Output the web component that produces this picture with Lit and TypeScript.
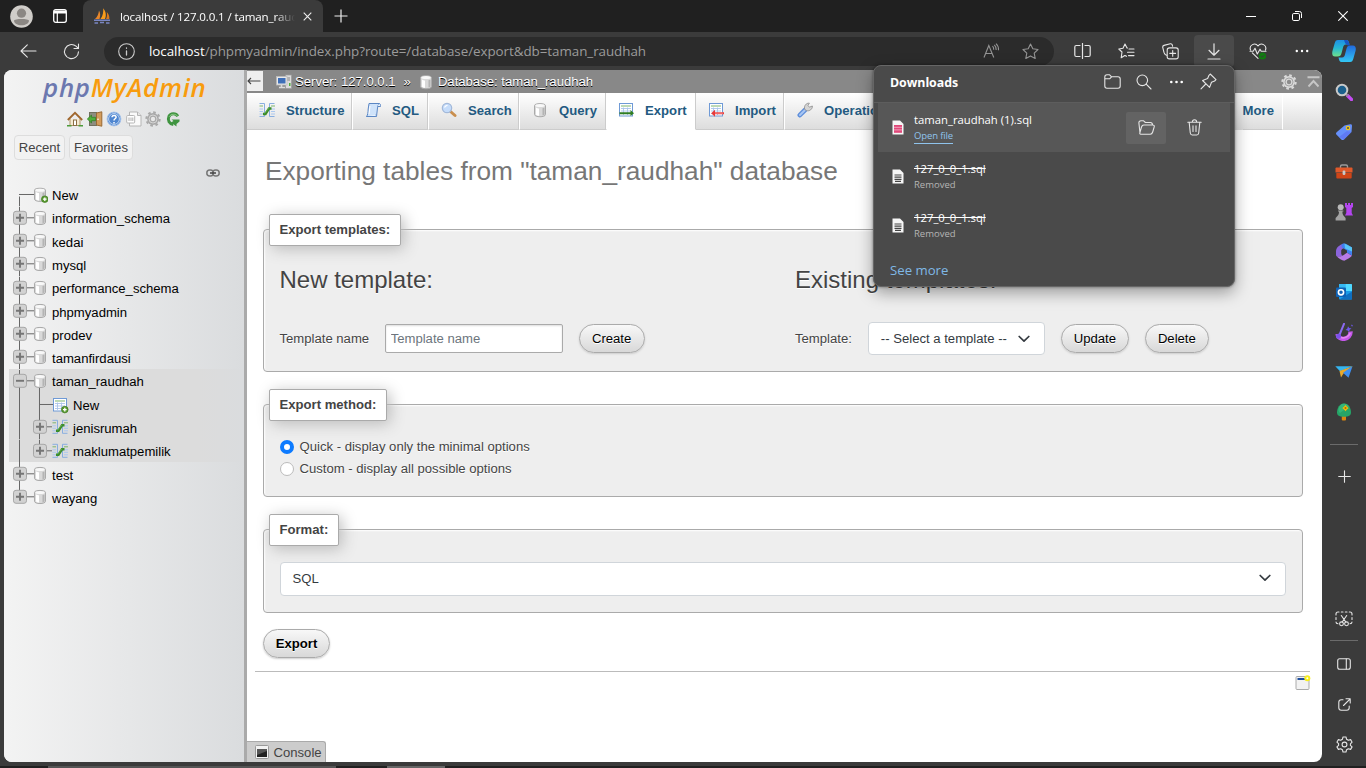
import { LitElement, html, svg, css, nothing, TemplateResult } from "lit";
import { customElement } from "lit/decorators.js";

type Glyph = TemplateResult | ReturnType<typeof svg>;

const icon = (w: number, h: number, vb: string, body: Glyph, cls = "") =>
  html`<svg class="ic ${cls}" width=${w} height=${h} viewBox=${vb} fill="none">${body}</svg>`;
const line = (w: number, h: number, body: Glyph, cls = "") =>
  icon(w, h, `0 0 ${w} ${h}`, svg`<g stroke="#e6e6e6" stroke-width="1.1" stroke-linecap="round" stroke-linejoin="round">${body}</g>`, cls);

/* phpMyAdmin icon set */
const dbShape = svg`
  <path d="M2.5 3.5C2.5 1 13.5 1 13.5 3.5V12.5C13.5 15.5 2.5 15.5 2.5 12.5Z" fill="#d9d9d9" stroke="#aaa"/>
  <path d="M4 5.5C5 6.3 6 6.5 7 6.5V13.8C6 13.8 4.5 13.3 4 12.8Z" fill="#fff"/>
  <path d="M10.5 6.3L12.5 5.6V12.8L10.5 13.6Z" fill="#b4b4b4"/>
  <ellipse cx="8" cy="3.6" rx="4.6" ry="1.5" fill="#f8f8f8"/>`;
const plusBadge = svg`<circle cx="12.8" cy="12.6" r="3.3" fill="#5a9a32" stroke="#3d7a1c" stroke-width=".7"/><path d="M12.8 10.8V14.4M11 12.6H14.6" stroke="#fff" stroke-width="1.3"/>`;
const tableShape = svg`
  <rect x="1.5" y="1.5" width="13" height="12.5" fill="#fff" stroke="#6f9ad6"/>
  <path d="M3 4H13" stroke="#7cb56f"/><path d="M3 6.5H13M3 9H13M3 11.5H13M5.5 5.5V13M9.5 5.5V13" stroke="#a9c4ea" stroke-width=".9"/>`;
const structShape = svg`
  <path d="M.5 1.5H5.5V14.5H.5M15.5 1.5H10.5V14.5H15.5" stroke="#88aee0"/>
  <path d="M.5 4H4M12 4H16" stroke="#7cb56f"/><path d="M.5 7H4M.5 9.5H4M.5 12H4M12 7H16M12 9.5H16M12 12H16" stroke="#abc8f0"/>
  <path d="M4 12H6.5L10 6.5H12.5" stroke="#3b8c2a" stroke-width="2.4"/><path d="M5.5 11.5L10 6" stroke="#6ab455" stroke-width=".8"/>`;
const gearShape = (c: string, d: string) => svg`
  <circle cx="8" cy="8" r="5.9" fill=${c}/><circle cx="8" cy="8" r="6.6" stroke=${c} stroke-width="2.2" stroke-dasharray="2.6 2.58"/>
  <circle cx="8" cy="8" r="4" stroke=${d} stroke-width=".7"/><circle cx="8" cy="8" r="2.2" fill=${d}/>`;

const menuIcons: Record<string, Glyph> = {
  structure: structShape,
  sql: svg`<path d="M4 1.5H14.5C13 2.5 13 4 12.5 6L11.5 14.5H1.5C3 13 3 10 3.2 7Z" fill="#cfe3fa" stroke="#5b87c4"/><path d="M12.5 4.5H15.5C15.6 3 15.6 2 14.3 1.5M1.5 14.5H10C11.5 14.5 11.5 13.5 11 12.5" stroke="#5b87c4" fill="#eaf3fd"/><path d="M5 4L4 12" stroke="#fff"/>`,
  search: svg`<path d="M9.5 9.5L14 13.5" stroke="#c98f4e" stroke-width="3" stroke-linecap="round"/><circle cx="6" cy="6" r="4.7" fill="#c5dcfa" stroke="#a3b9da" stroke-width="1.2"/><path d="M3.5 5.5C4 4 5 3.3 6.5 3.3" stroke="#fff" stroke-width="1.2"/>`,
  query: dbShape,
  export: svg`${tableShape}<path d="M1.5 11.2H13.5" stroke="#2f7d22" stroke-width="2"/><path d="M12.5 8L16 11.2L12.5 14Z" fill="#2f7d22"/>`,
  import: svg`${tableShape}<path d="M5.5 11.2H16" stroke="#e63a3a" stroke-width="2"/><path d="M7 7.7L3.2 11.2L7 14.7Z" fill="#e63a3a"/><path d="M7 11.2H15" stroke="#ff9a9a" stroke-width=".7"/>`,
  wrench: svg`<path d="M2.8 13.2L8 8" stroke="#5f8fdb" stroke-width="4.6" stroke-linecap="round"/><path d="M3 13L7.8 8.2" stroke="#a8c6f3" stroke-width="2" stroke-linecap="round"/><path d="M7.6 7.2C6.8 4 9 .8 12.4 1.2L11 3.4L12.4 5.2L15.4 4C15.6 7 12.6 9.6 9.4 8.6Z" fill="#d5d5d5" stroke="#8d8d8d" stroke-width=".8"/>`,
};

const quickIcons: Glyph[] = [
  svg`<path d="M3 8V14.5H13V8" fill="#f4ead2" stroke="#b09468"/><rect x="6.5" y="9" width="3" height="5.5" fill="#fff" stroke="#8b6f45"/><path d="M.8 9L8 1.8L15.2 9" stroke="#a0672e" stroke-width="1.9"/><path d="M0 14.8H4.5M11.5 14.8H16" stroke="#4d9b3a" stroke-width="1.6"/>`,
  svg`<rect x="2.5" y="1.5" width="7" height="13" fill="#8d8d80" stroke="#70705f"/><path d="M9.5 2L14.8 .8V15.2L9.5 14Z" fill="#d49c5c" stroke="#9a6a33"/><path d="M.3 8L4.5 4V6.3H8.5V9.7H4.5V12Z" fill="#4fae3c" stroke="#2f7d22" stroke-width=".7"/><circle cx="11" cy="8.3" r=".8" fill="#fff"/>`,
  svg`<circle cx="8" cy="8" r="6.9" fill="#4f86d0" stroke="#a5c2ea"/><circle cx="8" cy="8" r="5.4" stroke="#dbe8fa" stroke-width=".8"/><path d="M6 6.3C6 3.7 10.2 3.9 10.1 6.3C10 7.8 8 7.8 8 9.5M8 11V12.4" stroke="#fff" stroke-width="1.5"/>`,
  svg`<path d="M3.5 1H11.5L15 4.5V15H3.5Z" fill="#fafafa" stroke="#b5b5b5"/><path d="M11.5 1V4.5H15" stroke="#b5b5b5" fill="#e6e6e6"/><rect x=".7" y="4.5" width="8" height="7.5" rx="1" fill="#fff" stroke="#b5b5b5"/><path d="M3 6.5V10M5 6.5V10M6.8 6.5V10" stroke="#999" stroke-width=".8"/>`,
  gearShape("#a9a9a9", "#e8e8e8"),
  svg`<path d="M12.8 5.2C10.8 1.9 5.6 2 3.9 5.5C2.2 9.3 4.4 13 8.3 13.4" stroke="#3f9440" stroke-width="3"/><path d="M12.4 5C10.6 2.6 6 2.6 4.2 5.7" stroke="#8fcb88" stroke-width="1"/><path d="M6.5 8.5H14.5V10.5L11.5 13V15.5L6 11.5L8.5 10Z" fill="#3f9440"/>`,
];

interface Node { label: string; kind: "new" | "db" | "open" | "tnew" | "table"; last?: boolean }
const tree: Node[] = [
  { label: "New", kind: "new" },
  { label: "information_schema", kind: "db" },
  { label: "kedai", kind: "db" },
  { label: "mysql", kind: "db" },
  { label: "performance_schema", kind: "db" },
  { label: "phpmyadmin", kind: "db" },
  { label: "prodev", kind: "db" },
  { label: "tamanfirdausi", kind: "db" },
  { label: "taman_raudhah", kind: "open" },
  { label: "New", kind: "tnew" },
  { label: "jenisrumah", kind: "table" },
  { label: "maklumatpemilik", kind: "table", last: true },
  { label: "test", kind: "db" },
  { label: "wayang", kind: "db", last: true },
];

const toggle = (cx: number, minus = false) => svg`
  <rect x=${cx - 6.5} y="4.3" width="13" height="13" rx="2.5" fill="#d2d2d2" stroke="#a6a6a6"/>
  <path d=${minus ? `M${cx - 4} 10.8H${cx + 4}` : `M${cx - 4} 10.8H${cx + 4}M${cx} 6.8V14.8`} stroke="#757575" stroke-width="1.9"/>`;
const stroke = (d: string) => svg`<path d=${d} stroke="#666" stroke-width="1"/>`;

const treeGlyph = (n: Node) => {
  const sub = n.kind === "tnew" || n.kind === "table";
  const w = sub ? 65 : 44;
  let body: Glyph;
  if (n.kind === "new") {
    body = svg`${stroke("M15 11.5H31M15.5 13.5V23.3")}<g transform="translate(28 3.6)">${dbShape}${plusBadge}</g>`;
  } else if (n.kind === "db" || n.kind === "open") {
    body = svg`${stroke(n.last ? "M15.5 0V5" : "M15.5 0V23.3")}${stroke("M22 10.8H31")}
      ${n.kind === "open" ? stroke("M35.5 17V23.3") : nothing}
      ${toggle(16, n.kind === "open")}<g transform="translate(28 2.8)">${dbShape}</g>`;
  } else if (n.kind === "tnew") {
    body = svg`${stroke("M15.5 0V23.3M35.5 0V23.3M35.5 11.5H50")}<g transform="translate(48 4)">${tableShape}${plusBadge}</g>`;
  } else {
    body = svg`${stroke("M15.5 0V23.3")}${stroke(n.last ? "M35.5 0V5" : "M35.5 0V23.3")}${stroke("M42 10.8H48")}
      ${toggle(36)}<g transform="translate(48 2.8)">${structShape}</g>`;
  }
  return icon(w, 23.3, `0 0 ${w} 23.3`, body, "tg");
};

/* Browser rail icons */
const rail: Glyph[] = [
  svg`<path d="M12.5 12.5L16.5 16.5" stroke="#c44bf2" stroke-width="3.4" stroke-linecap="round"/><path d="M11 11L13 13" stroke="#8a8a8a" stroke-width="2"/><circle cx="7" cy="7" r="5.3" fill="#1c5f8c" stroke="#c9c9c9" stroke-width="2"/>`,
  svg`<path d="M9.5 2.5L15 1.2C16.5 1 17 1.6 17 3L16.5 9L9 16.4C8 17.3 7.2 17.3 6.3 16.4L1.6 11.8C.8 11 .8 10 1.6 9.2Z" fill="#6690fa"/><path d="M4 14L9 16.4L16.5 9L12 8Z" fill="#5a6cf0" opacity=".6"/><circle cx="13" cy="5" r="1.7" stroke="#f2c81a" stroke-width="1.2" fill="#555"/>`,
  svg`<path d="M5.5 5V3.5C5.5 2.6 6 2 7 2H11C12 2 12.5 2.6 12.5 3.5V5" stroke="#9b9b9b" stroke-width="1.4"/><path d="M.5 5.5C.5 5 1 4.6 1.6 4.6H16.4C17 4.6 17.5 5 17.5 5.5V9.5H.5Z" fill="#e0592a"/><path d="M1.3 10H16.7V14.5C16.7 15 16.2 15.5 15.6 15.5H2.4C1.8 15.5 1.3 15 1.3 14.5Z" fill="#cf4518"/><rect x="7.6" y="7.6" width="2.8" height="4.4" rx="1.2" fill="#c9c9c9"/>`,
  svg`<path d="M10 0H12V2H13V0H15V2H16V0H18V4L16.7 5V10L18 12.5H10L11.3 10V5L10 4Z" fill="#b445f0"/><circle cx="5.7" cy="4.3" r="3" fill="#b9b9b9"/><path d="M3 7.5H8.4V8.6H7.4C7.4 11 8 12.5 9.3 13.5L10.6 15V17.5H.6V15L2 13.5C3.4 12.5 4 11 4 8.6H3Z" fill="#a2a2a2"/>`,
  svg`<path d="M8.5 .6C4.5 2.3 1 4.3 1 8.5V12.6C3 14.6 5.5 14 7.2 12.6L6.2 11V7.4C6.8 6 9 4.6 11 4Z" fill="#8b64dc"/><path d="M7 1C9.5-.3 11 .6 17 4.4V12.6L12 9.8V7.4L7.4 4.8C6.2 3.6 6.3 2 7 1Z" fill="#3f7ff0"/><path d="M9.5 .6L17 4.4V8.6L10 5.4Z" fill="#56c5f5"/><path d="M1.2 12.8C4 14.8 6.5 13.6 12 9.8L17 12.8C15 14.8 12 16.4 9.8 17.6C7.5 17.9 4 15.8 1.2 12.8Z" fill="#b77be8"/>`,
  svg`<rect x="4" y="1" width="13" height="15.5" rx="1" fill="#1a9be8"/><path d="M4 1H10.5V8H4Z" fill="#35b8f2"/><path d="M10.5 1H16A1 1 0 0 1 17 2V8H10.5Z" fill="#50d9ff"/><path d="M4.5 16.5L17 8.5V16.5Z" fill="#0f6fc0"/><rect x="1" y="4.6" width="10" height="9.5" rx="1" fill="#0f62b5"/><circle cx="6" cy="9.3" r="2.6" stroke="#fff" stroke-width="1.6"/>`,
  svg`<path d="M2.5 11C3.2 18.5 16 17 15.5 8.5" stroke="#c558ea" stroke-width="4.4"/><path d="M3.5 13C6 16 13 15.5 15.2 10" stroke="#e487f4" stroke-width="1.6"/><path d="M9 .8L4 13" stroke="#8b6af2" stroke-width="2" stroke-linecap="round"/><circle cx="3.6" cy="13.2" r="2.5" fill="#7a52ea"/><path d="M13 3.2L14.2 5L16.5 5.5L14.6 6.8L14.2 9L12.6 7.4L10.5 7L12.4 5.6ZM16.6 1.6L17.8 2.2L17.4 3.6L16.2 3Z" fill="#6f57ef"/>`,
  svg`<path d="M.3 3.2L17.5 3.2L5 8.2Z" fill="#35b5f0"/><path d="M17.5 3.2L4.5 8L6 14.5L8.3 10.7Z" fill="#e8a92b"/><path d="M17.5 3.2L8 9.8L13.5 14.8Z" fill="#3d8ff2"/>`,
  svg`<rect x="6.8" y="12" width="4.2" height="5.6" rx="1" fill="#d9860f"/><path d="M9 .5C13.5.5 16 5 16 9.5C16 12.7 13.5 13.8 9 13.8S2 12.7 2 9.5C2 5 4.5.5 9 .5Z" fill="#25a567"/><path d="M9 .5C11 .5 12.8 1.6 14 3.2L5 10C3.5 9 3 7 4 4.5C5 2 7 .5 9 .5Z" fill="#3fc283" opacity=".6"/><path d="M10.5 2L12 3.7L13.7 5L12 6.5L10.5 8.2L9 6.5L7.3 5L9 3.7Z" fill="#f2b90d"/><circle cx="10.5" cy="5" r="1" fill="#b06a00"/>`,
];

const fileIcon = (accent: boolean) =>
  icon(12, 15, "0 0 12 15", svg`<path d="M.5 .5H8L11.5 4V14.5H.5Z" fill="#f6f6f6"/>${accent
    ? svg`<path d="M2 5H10V12.8H2Z" fill="#e0487a"/><path d="M2 7.3H10M2 9.9H10" stroke="#f9c9d8" stroke-width=".7"/>`
    : svg`<path d="M2.5 6H9.5M2.5 8.2H9.5M2.5 10.4H9.5M3 12.4H9" stroke="#444" stroke-width="1.2"/>`}`);

const chevron = icon(12, 8, "0 0 12 8", svg`<path d="M1.2 1.5L6 6.2L10.8 1.5" stroke="#343a40" stroke-width="1.7" stroke-linecap="round" stroke-linejoin="round"/>`);

@customElement("app-root")
export class AppRoot extends LitElement {
  static styles = css`
    :host { display: block; width: 1366px; height: 768px; overflow: hidden; }
    * { box-sizing: border-box; }
    .win { width: 1366px; height: 768px; display: flex; flex-direction: column; position: relative; background: #3b3b3b; font-family: "Liberation Sans", Arial, sans-serif; font-size: 13.12px; color: #444; white-space: nowrap; }
    .ic { display: block; flex: none; }
    .ui { font-family: "Open Sans", "Noto Sans", sans-serif; }

    .titlebar { height: 32px; flex: none; background: #202020; display: flex; color: #fff; }
    .profile { width: 83px; display: flex; align-items: center; padding-left: 10px; gap: 20px; }
    .tab { width: 240px; background: #3b3b3b; border-radius: 8px 8px 0 0; display: flex; align-items: center; padding-left: 11px; }
    .tab .title { width: 175px; margin-left: 10px; overflow: hidden; font-size: 11.6px; letter-spacing: -.15px; -webkit-mask-image: linear-gradient(90deg, #000 155px, transparent 175px); }
    .tab .x { margin-left: 8px; }
    .newtab { margin: 9px 0 0 11px; }
    .winctl { margin-left: auto; display: flex; align-items: center; gap: 36px; padding-right: 18px; }

    .toolbar { height: 38px; flex: none; display: flex; align-items: center; padding-left: 20px; }
    .reload { margin-left: 26px; }
    .address { width: 950px; height: 29px; margin: 0 0 0 24px; border-radius: 15px; background: #2b2b2b; display: flex; align-items: center; padding: 0 15px 0 14px; color: #9b9b9b; font-size: 13.4px; }
    .url { margin-left: 14px; flex: 1; letter-spacing: -.05px; }
    .url b { color: #fff; font-weight: 400; }
    .readaloud { margin-right: 22.5px; }
    .tools { display: flex; align-items: center; margin-left: 8px; }
    .tools .t { width: 40px; height: 32px; display: flex; align-items: center; justify-content: center; margin-right: 4px; border-radius: 4px; flex: none; }
    .tools .t.on { background: #4a4a4a; }
    .copilot { margin-left: 6px; }

    .body { flex: 1; min-height: 0; display: flex; padding-left: 4px; }
    .page { width: 1318px; height: 692px; flex: none; border-radius: 8px; overflow: hidden; display: flex; background: #fff; }
    .rail { width: 44px; display: flex; flex-direction: column; align-items: center; padding: 1px 0 2px; }
    .rail .slot { height: 40.1px; display: flex; align-items: center; justify-content: center; flex: none; padding-top: 1px; }
    .rail .sep { width: 28px; height: 1px; background: #6b6b6b; flex: none; }
    .rail .s1 { margin: 12px 0 11.5px; }
    .rail .grow { flex: 1; }
    .rail .s2 { margin: 2px 0 2.5px; }
    .strip { height: 2px; flex: none; background: linear-gradient(90deg, #202020 48px, #555 48px 336px, #202020 336px 387px, #666 387px 445px, #202020 445px); }

    .nav { width: 240px; flex: none; background: linear-gradient(90deg, #f3f3f3, #dadcde); display: flex; flex-direction: column; color: #000; }
    .logo { height: 36px; margin-left: 39px; font: italic 600 25.8px/35px "Open Sans", sans-serif; letter-spacing: .75px; color: #6c78af; }
    .logo span { color: #f89c0e; }
    .quick { display: flex; gap: 3.6px; margin: 5px 0 0 63px; }
    .choice { display: flex; gap: 4px; margin: 8px 0 0 10px; }
    .choice span { height: 25px; border: 1px solid #ddd; border-radius: 4px; background: #f2f2f2; color: #444; display: flex; align-items: center; justify-content: center; }
    .choice .c1 { width: 51px; } .choice .c2 { width: 64px; }
    .link { margin: 8.7px 0 6.7px 202px; }
    .row { height: 23.3px; display: flex; align-items: center; flex: none; }
    .row .name { margin-left: 4px; padding-top: 1px; }
    .sel { margin: -1.2px 0 1.2px 5px; padding-top: 1.2px; height: 93.2px; flex: none; background: linear-gradient(90deg, #dcdcdc 80%, #dadcde); }
    .sel .tg { margin-left: -5px; }
    .resizer { width: 3px; flex: none; background: #aaa; }

    .main { flex: 1; min-width: 0; display: flex; flex-direction: column; }
    .crumbs { height: 23px; flex: none; background: #888; display: flex; align-items: center; color: #fff; text-shadow: 0 1px 0 #000; }
    .back { width: 16px; height: 20px; background: #eee; display: flex; align-items: center; margin-bottom: 1px; }
    .crumbs .srv { margin: 0 3px 0 13px; }
    .crumbs .raquo { margin: 0 7px 0 8px; }
    .crumbs .dbt { margin-left: 4px; }
    .crumbs .gear { margin-left: auto; }
    .crumbs .up { margin: 0 2px 0 10px; }
    .menu { height: 37px; flex: none; display: flex; background: linear-gradient(#fff, #dcdcdc); font-weight: 700; color: #235a81; letter-spacing: .02px; }
    .m { display: flex; align-items: center; padding: 0 0 2px 12px; gap: 11px; border-right: 1px solid #fff; border-bottom: 1px solid #ccc; box-shadow: inset -1px 0 #ccc; flex: none; overflow: hidden; }
    .m.on { background: #fff; border-bottom-color: #fff; padding-left: 11px; border-right: 1px solid #ccc; box-shadow: none; }
    .m0 { width: 106px; } .m1 { width: 76px; } .m2 { width: 91px; } .m3 { width: 87px; } .m4 { width: 89px; } .m5 { width: 89px; } .m6 { width: 125px; }
    .more { margin-left: auto; padding-right: 8px; border-right: 1px solid #fff; display: flex; align-items: center; padding-bottom: 2px; margin-right: 39px; border-bottom: 1px solid #ccc; }

    .content { flex: 1; display: flex; flex-direction: column; padding: 0 19px 0 16px; }
    h2 { margin: 0 0 0 2px; height: 99px; flex: none; font-weight: 400; font-size: 26.24px; line-height: 83px; color: #777; }
    .set { border: 1px solid #aaa; border-radius: 4px; background: #eee; box-shadow: inset 1px 1px 2px #fff; padding: 0 16px 0 15.5px; flex: none; margin-bottom: 32px; text-shadow: 0 1px 0 #fff; }
    .legend { display: flex; width: max-content; height: 32px; align-items: center; margin: -16px 0 0 -10.5px; padding: 0 10px 2px 9.5px; border: 1px solid #aaa; border-radius: 2px; background: #fff; box-shadow: 3px 3px 15px #bbb; font-weight: 700; }
    .f1 { height: 143px; } .f2 { height: 93px; } .f3 { height: 84px; margin-bottom: 16px; }
    .cols { display: grid; grid-template-columns: 515.5px 1fr; }
    h3 { margin: 0; font-weight: 400; font-size: 24px; line-height: 30px; padding-top: 19px; height: 76px; }
    .line { display: flex; align-items: center; height: 33px; }
    .input { width: 178px; height: 29px; margin: 0 16px 0 15.5px; border: 1px solid #aaa; border-radius: 2px; padding: 0 5px; background: #fff; box-shadow: inset 0 1px 2px #ddd; font: inherit; }
    .input::placeholder { color: #6c757d; opacity: 1; }
    .btn { height: 29px; border: 1px solid #aaa; border-radius: 15px; background: linear-gradient(#f8f8f8, #d8d8d8); color: #000; display: flex; align-items: center; justify-content: center; box-shadow: 0 1px 2px #ccc; text-shadow: 0 1px 0 #fff; flex: none; }
    .w66 { width: 66px; } .w68 { width: 68px; margin-right: 16px; } .w64 { width: 64px; }
    .select { background: #fff; border: 1px solid #d0d5da; border-radius: 4px; display: flex; align-items: center; justify-content: space-between; color: #343a40; }
    .s-a { width: 177px; height: 33px; margin: 0 16px; padding: 0 14px 0 12px; }
    .s-b { height: 34px; margin-top: 16px; padding: 0 14px 2px 12px; }
    .radios { padding-top: 14.5px; }
    .radio { height: 22px; display: flex; align-items: center; gap: 6px; }
    .dot { width: 14px; height: 14px; border-radius: 50%; border: 1px solid #bbb; background: #fff; }
    .dot.on { border: 4.5px solid #0d7bff; }
    .go { width: 67px; font-weight: 700; }
    .hr { height: 1px; background: #bbb; margin: 13px -7px 0 -8px; flex: none; }
    .newwin { align-self: flex-end; margin: 3px -8px 0 0; }
    .console { width: 79px; height: 21px; margin-top: auto; border: 1px solid #aaa; border-width: 1px 1px 0 0; border-radius: 0 3px 0 0; background: #ccc; display: flex; align-items: center; padding-left: 8px; gap: 4.5px; flex: none; }

    .dl { position: absolute; left: 873px; top: 65px; width: 362px; height: 222px; border: 1px solid #666; border-radius: 8px; background: #4a4a4a; box-shadow: 0 6px 16px rgba(0,0,0,.35), 0 0 3px rgba(0,0,0,.4); color: #fff; }
    .dlhead { height: 37px; display: flex; align-items: center; padding: 0 17px 0 16px; border-bottom: 1px solid #5d5d5d; }
    .dlhead b { font-size: 12.4px; font-weight: 700; flex: 1; letter-spacing: -.05px; padding-bottom: 3px; }
    .dlhead .ic { margin-left: 15.5px; margin-bottom: 5px; }
    .item { height: 49px; margin: 0 4px; display: flex; align-items: center; padding-left: 14px; }
    .item.hot { background: #575757; }
    .item .txt { margin-left: 10px; flex: 1; display: flex; flex-direction: column; align-items: flex-start; }
    .fn { font-size: 11.3px; line-height: 16px; }
    .fn.gone { text-decoration: line-through; line-height: 15px; padding-bottom: 2px; margin-top: -1px; }
    .st { font-size: 9.5px; line-height: 14px; color: #b5b5b5; }
    .st.open { color: #8fc3ec; border-bottom: 1px solid #8fc3ec; line-height: 15px; letter-spacing: -.12px; }
    .act { width: 40px; height: 32px; display: flex; align-items: center; justify-content: center; border-radius: 2px; margin-right: 8px; }
    .act.on { background: #636363; }
    .item .last { margin-right: 16px; }
    .seemore { padding: 10px 16px 0; font-size: 13.2px; color: #7fb8e6; line-height: 20px; }
  `;

  private titlebar() {
    return html`<div class="titlebar ui">
      <div class="profile">
        ${icon(23, 23, "0 0 23 23", svg`<circle cx="11.5" cy="11.5" r="11.3" fill="#d0cdc9"/><circle cx="11.5" cy="8.2" r="4.6" fill="#8b8783"/><path d="M4 15.8C4 13.5 19 13.5 19 15.8C18.6 18.6 15.5 20.3 11.5 20.3S4.4 18.6 4 15.8Z" fill="#8b8783"/>`)}
        ${icon(14, 14, "0 0 14 14", svg`<rect x=".7" y=".7" width="12.6" height="12.6" rx="2" stroke="#fff" stroke-width="1.3"/><path d="M1 3H13" stroke="#fff" stroke-width="3"/><path d="M4.3 3V13" stroke="#fff" stroke-width="1.2"/>`)}
      </div>
      <div class="tab">
        ${icon(16, 16, "0 0 16 16", svg`<path d="M1 11C3.5 9 4.5 6 5 2.5C6.5 5 6.5 8 5.5 11Z" fill="#e8872b"/><path d="M6.5 11C9 8 9.5 4 9.2.3C12.3 4 12.3 8 11 11Z" fill="#f89c1c"/><path d="M12 11C13.3 8.5 13.2 6 12.8 4C15 6.5 15.6 8.5 15.3 11Z" fill="#d9791e"/><path d="M0 12.3H16M.5 15H4M6 14.5H10M12 15H15.5" stroke="#7a86c2" stroke-width="1.4"/>`)}
        <span class="title">localhost / 127.0.0.1 / taman_raudhah</span>
        <span class="x">${icon(9, 9, "0 0 9 9", svg`<path d="M.7 .7L8.3 8.3M8.3 .7L.7 8.3" stroke="#eee" stroke-width="1.1"/>`)}</span>
      </div>
      <span class="newtab">${icon(14, 14, "0 0 14 14", svg`<path d="M7 .5V13.5M.5 7H13.5" stroke="#eee" stroke-width="1.2"/>`)}</span>
      <div class="winctl">
        ${icon(10, 10, "0 0 10 10", svg`<path d="M0 5.5H10" stroke="#fff"/>`)}
        ${icon(10, 10, "0 0 10 10", svg`<rect x=".5" y="2.5" width="7" height="7" rx="1.3" stroke="#fff"/><path d="M3 .5H7.5A2 2 0 0 1 9.5 2.5V7" stroke="#fff"/>`)}
        ${icon(10, 10, "0 0 10 10", svg`<path d="M.3 .3L9.7 9.7M9.7 .3L.3 9.7" stroke="#fff" stroke-width="1.1"/>`)}
      </div>
    </div>`;
  }

  private toolbar() {
    const t = (body: TemplateResult, on = false) => html`<span class="t ${on ? "on" : ""}">${body}</span>`;
    return html`<div class="toolbar ui">
      ${line(17, 14, svg`<path d="M16 7H1M7.3 .8L1 7L7.3 13.2"/>`)}
      ${line(17, 17, svg`<path d="M15.5 8.7A7 7 0 1 1 13 3.2L15.3 5.4M15.5 1V5.5H11"/>`, "reload")}
      <div class="address">
        ${line(17, 17, svg`<circle cx="8.5" cy="8.5" r="7.8" stroke="#ccc"/><path d="M8.5 8V12M8.5 5V5.3" stroke="#ccc" stroke-width="1.3"/>`)}
        <span class="url"><b>localhost</b>/phpmyadmin/index.php?route=/database/export&amp;db=taman_raudhah</span>
        ${icon(17, 16, "0 0 17 16", svg`<path d="M1 14.5L5.8 2.5L10.8 14.5M2.7 10.5H9.2M9.5 3.2C10.5 4.2 10.8 5.3 10.7 6.7M11.3 1.8C12.8 3.2 13.3 5 13.2 7M13 .6C15 2.4 15.7 4.7 15.5 7.2" stroke="#949494" stroke-width="1.1"/>`, "readaloud")}
        ${icon(17, 17, "0 0 17 17", svg`<path d="M8.5 1L10.8 5.8L16 6.5L12.2 10.1L13.2 15.5L8.5 12.9L3.8 15.5L4.8 10.1L1 6.5L6.2 5.8Z" stroke="#949494" stroke-width="1.1" stroke-linejoin="round"/>`)}
      </div>
      <div class="tools">
        ${t(line(17, 16, svg`<path d="M8.5 .5V15.5M6 2.5H2.2C1.3 2.5 .8 3 .8 3.9V12C.8 13 1.3 13.5 2.2 13.5H6M11 2.5H14.8C15.7 2.5 16.2 3 16.2 3.9V12C16.2 13 15.7 13.5 14.8 13.5H11" stroke-width="1.2"/>`))}
        ${t(line(17, 17, svg`<path d="M9.5 5H9L7 1L5 5.2L.8 6L4 9L3.2 14.8L6.8 12.5M11 6H16M9.5 9.3H16M10.5 12.6H16"/><path d="M7 12.5L8.5 13.3"/>`))}
        ${t(line(17, 17, svg`<path d="M4.7 12.2L3.6 11.7C2.6 11.2 2.3 10.4 2 9.4L.8 4.7C.5 3.6 1 2.7 2 2.4L8.3.8C9.3.6 10 1 10.3 2L10.6 3.3"/><rect x="5.2" y="4.9" width="11" height="11" rx="2.2"/><path d="M10.7 7.5V13.3M7.8 10.4H13.6"/>`))}
        ${t(line(14, 17, svg`<path d="M7 .8V12M2 7.3L7 12.2L12 7.3M1 16H13" stroke-width="1.2"/>`), true)}
        ${t(line(18, 17, svg`<path d="M1.5 7C-.3 2 6 -1 9 3C12 -1 18.3 2 16.5 7M3.3 9.8L9 15.3M1 8.3H4.2L6 5.3L8.3 11L11 6.2L12.2 8.3H17"/><circle cx="13.5" cy="13" r="3.6" fill="#107c10" stroke="none"/><path d="M12 13L13.2 14.2L15.2 12" stroke="#3b3b3b" stroke-width=".9"/>`))}
        ${t(icon(14, 4, "0 0 14 4", svg`<circle cx="1.8" cy="2" r="1.2" fill="#fff"/><circle cx="7" cy="2" r="1.2" fill="#fff"/><circle cx="12.2" cy="2" r="1.2" fill="#fff"/>`))}
        ${icon(24, 24, "0 0 24 24", svg`
          <defs><linearGradient id="ca" x1="0" y1="0" x2="0" y2="1"><stop stop-color="#1e8fe6"/><stop offset=".5" stop-color="#27b8d2"/><stop offset="1" stop-color="#6fe08a"/></linearGradient>
          <linearGradient id="cb" x1="0" y1="0" x2="0" y2="1"><stop stop-color="#2069dc"/><stop offset="1" stop-color="#33c8f5"/></linearGradient></defs>
          <path d="M6 1H14.5C16.5 1 16.9 3 17.5 5.5H14C12 5.5 11.4 7 10.9 9L9.6 14C9 16.4 8 17.5 5.5 17.5H3C.5 17.5-.2 15.3 .4 12.3L2.6 4.5C3.3 2 4 1 6 1Z" fill="url(#ca)"/>
          <path d="M18 23H9.5C7.5 23 7.1 21 6.5 18.5H10C12 18.5 12.6 17 13.1 15L14.4 10C15 7.6 16 6.5 18.5 6.5H21C23.5 6.5 24.2 8.7 23.6 11.7L21.4 19.5C20.7 22 20 23 18 23Z" fill="url(#cb)"/>
          <path d="M12 1H14.5C16.5 1 16.9 3 17.8 6.5C15.6 6.8 13.6 6.5 12 1Z" fill="#1a56c4"/>`, "copilot")}
      </div>
    </div>`;
  }

  private nav() {
    const row = (n: Node) => html`<div class="row">${treeGlyph(n)}<span class="name">${n.label}</span></div>`;
    return html`<div class="nav">
      <div class="logo">php<span>MyAdmin</span></div>
      <div class="quick">${quickIcons.map((q) => icon(16, 16, "0 0 16 16", q))}</div>
      <div class="choice"><span class="c1">Recent</span><span class="c2">Favorites</span></div>
      <div class="link">${icon(14, 8, "0 0 14 8", svg`<rect x=".8" y="1" width="6.6" height="6" rx="3" stroke="#777" stroke-width="1.5"/><rect x="6.6" y="1" width="6.6" height="6" rx="3" stroke="#777" stroke-width="1.5"/><path d="M4 4H10" stroke="#444" stroke-width="1.5"/>`)}</div>
      ${tree.slice(0, 8).map(row)}
      <div class="sel">${tree.slice(8, 12).map(row)}</div>
      ${tree.slice(12).map(row)}
    </div>`;
  }

  private mainPane() {
    const tabs: [string, string][] = [["structure", "Structure"], ["sql", "SQL"], ["search", "Search"], ["query", "Query"], ["export", "Export"], ["import", "Import"], ["wrench", "Operations"]];
    return html`<div class="main">
      <div class="crumbs">
        <span class="back">${icon(14, 8, "0 0 14 8", svg`<path d="M13.5 4H1M4 1L1 4L4 7" stroke="#444" stroke-width="1.1"/>`)}</span>
        ${icon(16, 16, "0 0 16 16", svg`<rect x="9.5" y="1" width="6" height="13.5" fill="#dcdcdc" stroke="#9a9a9a" stroke-width=".7"/><path d="M11 4H14M11 6H14" stroke="#888"/><rect x="13" y="9" width="1.5" height="3" fill="#4fae3c"/><rect x=".5" y="2.5" width="10.5" height="8.5" fill="#e8e8e8" stroke="#bbb" stroke-width=".8"/><rect x="2" y="4" width="7.5" height="5.5" fill="#3f6fb8"/><path d="M3 13.5H9M5.5 11V13.5" stroke="#ddd" stroke-width="1.6"/>`, "srv")}
        <span>Server: 127.0.0.1</span><span class="raquo">»</span>
        ${icon(16, 16, "0 0 16 16", dbShape)}
        <span class="dbt">Database: taman_raudhah</span>
        ${icon(16, 16, "0 0 16 16", gearShape("#dadada", "#8c8c8c"), "gear")}
        ${icon(13, 12, "0 0 13 12", svg`<path d="M.5 1.3H12.5M1.5 10.5L6.5 5L11.5 10.5" stroke="#c6c6c6" stroke-width="1.9"/>`, "up")}
      </div>
      <div class="menu">
        ${tabs.map(([k, l], i) => html`<div class="m m${i} ${k === "export" ? "on" : ""}">${icon(16, 16, "0 0 16 16", menuIcons[k])}<span>${l}</span></div>`)}
        <div class="more">More</div>
      </div>
      <div class="content">
        <h2>Exporting tables from "taman_raudhah" database</h2>
        <div class="set f1">
          <div class="legend">Export templates:</div>
          <div class="cols">
            <div><h3>New template:</h3><div class="line">Template name<input class="input" placeholder="Template name"><span class="btn w66">Create</span></div></div>
            <div><h3>Existing templates:</h3><div class="line">Template:<span class="select s-a"><span>-- Select a template --</span>${chevron}</span><span class="btn w68">Update</span><span class="btn w64">Delete</span></div></div>
          </div>
        </div>
        <div class="set f2">
          <div class="legend">Export method:</div>
          <div class="radios">
            <div class="radio"><span class="dot on"></span>Quick - display only the minimal options</div>
            <div class="radio"><span class="dot"></span>Custom - display all possible options</div>
          </div>
        </div>
        <div class="set f3">
          <div class="legend">Format:</div>
          <div class="select s-b"><span>SQL</span>${chevron}</div>
        </div>
        <div class="btn go">Export</div>
        <div class="hr"></div>
        <div class="newwin">${icon(16, 16, "0 0 16 16", svg`<rect x="1" y="1.5" width="13" height="13" rx="1" fill="#f2f2f2" stroke="#aaa"/><path d="M2.5 4H10" stroke="#1d4fa0" stroke-width="2.2"/><circle cx="12.3" cy="3.2" r="3" fill="#f7ee1e"/><circle cx="12.3" cy="3.2" r="1" fill="#fff"/>`)}</div>
      </div>
      <div class="console">${icon(14, 14, "0 0 14 14", svg`<rect x=".5" y=".5" width="13" height="13" rx="1" fill="#f2f2f2" stroke="#999"/><path d="M2 4H12V12H2Z" fill="#222"/><path d="M2 4H12V6L2 10Z" fill="#555"/>`)}<span>Console</span></div>
    </div>`;
  }

  private railPane() {
    return html`<div class="rail">
      ${rail.map((r) => html`<span class="slot">${icon(18, 18, "0 0 18 18", r)}</span>`)}
      <span class="sep s1"></span>
      <span class="slot">${line(13, 13, svg`<path d="M6.5 .7V12.3M.7 6.5H12.3"/>`)}</span>
      <span class="grow"></span>
      <span class="slot">${line(18, 16, svg`<path d="M1 4V3C1 1.8 1.8 1 3 1H4M6.3 1H8M10.3 1H12M14.3 1H15C16.2 1 17 1.8 17 3V4M17 6.5V8.5M1 6.5V8.5M1 11C1 12 1.8 12.7 3 12.7M17 11C17 12 16.2 12.7 15 12.7M6.3 4.5L10.8 11M11.7 4.5L7.2 11"/><circle cx="6.5" cy="12.8" r="1.9"/><circle cx="11.5" cy="12.8" r="1.9"/>`)}</span>
      <span class="sep s2"></span>
      <span class="slot">${line(14, 12, svg`<rect x=".7" y=".7" width="12.6" height="10.6" rx="2"/><path d="M9.3 1V11"/>`)}</span>
      <span class="slot">${line(13, 13, svg`<path d="M5 1.8H3.3C1.8 1.8 .8 2.8 .8 4.3V9.7C.8 11.2 1.8 12.2 3.3 12.2H8.7C10.2 12.2 11.2 11.2 11.2 9.7V8M5.5 7.5L12.2 .8M8 .8H12.2V5"/>`)}</span>
      <span class="slot">${line(17, 17, svg`<circle cx="8.5" cy="8.5" r="2.4"/><path d="M7 1H10L10.6 3.3L12.3 4.3L14.6 3.6L16.1 6.2L14.4 7.8V9.4L16.1 10.9L14.6 13.4L12.3 12.7L10.6 13.7L10 16H7L6.4 13.7L4.7 12.7L2.4 13.4L.9 10.9L2.6 9.3V7.7L.9 6.2L2.4 3.6L4.7 4.3L6.4 3.3Z"/>`)}</span>
    </div>`;
  }

  private downloads() {
    return html`<div class="dl ui">
      <div class="dlhead"><b>Downloads</b>
        ${line(17, 15, svg`<path d="M.8 3C.8 1.6 1.6 .8 3 .8H5.6L7.6 2.8H14C15.4 2.8 16.2 3.6 16.2 5V12C16.2 13.4 15.4 14.2 14 14.2H3C1.6 14.2 .8 13.4 .8 12ZM.8 4.8H5.6L7.6 2.8"/>`)}
        ${line(16, 16, svg`<circle cx="6.3" cy="6.3" r="5.3"/><path d="M10.2 10.2L15 15"/>`)}
        ${icon(17, 4, "0 0 17 4", svg`<circle cx="3.3" cy="2" r="1.3" fill="#fff"/><circle cx="8.5" cy="2" r="1.3" fill="#fff"/><circle cx="13.7" cy="2" r="1.3" fill="#fff"/>`)}
        ${line(17, 17, svg`<path d="M10.2 1L16 6.6L14.6 8L11.5 9.3L9.6 14.4L2.6 7.5L7.6 5.5L9 2.3ZM5.8 11L1 15.8"/>`)}
      </div>
      <div class="item hot">${fileIcon(true)}<div class="txt"><span class="fn">taman_raudhah (1).sql</span><span class="st open">Open file</span></div>
        <span class="act on">${line(17, 15, svg`<path d="M2 13L.9 3C.8 1.6 1.6 .8 3 .8H5.6L7.4 2.5H12.5C13.7 2.5 14.4 3.2 14.5 4.8M2.8 14.2C1.8 14.2 1.6 13.6 1.9 12.6L3.5 7C3.9 5.6 4.5 5 5.8 5H14.8C16 5 16.5 5.7 16.2 6.8L14.7 12C14.2 13.6 13.6 14.2 12.3 14.2Z"/>`)}</span>
        <span class="act last">${line(15, 17, svg`<path d="M.8 3.3H14.2M5.3 3.2C5.3 -.1 9.7 -.1 9.7 3.2M2.2 3.5L3.3 14C3.5 15.4 4 16 5.2 16H9.8C11 16 11.5 15.4 11.7 14L12.8 3.5M6 6.8V12.5M9 6.8V12.5"/>`)}</span></div>
      ${[0, 1].map(() => html`<div class="item">${fileIcon(false)}<div class="txt"><span class="fn gone">127_0_0_1.sql</span><span class="st">Removed</span></div></div>`)}
      <div class="seemore">See more</div>
    </div>`;
  }

  render() {
    return html`<div class="win">
      ${this.titlebar()}${this.toolbar()}
      <div class="body"><div class="page">${this.nav()}<div class="resizer"></div>${this.mainPane()}</div>${this.railPane()}</div>
      <div class="strip"></div>
      ${this.downloads()}
    </div>`;
  }
}
